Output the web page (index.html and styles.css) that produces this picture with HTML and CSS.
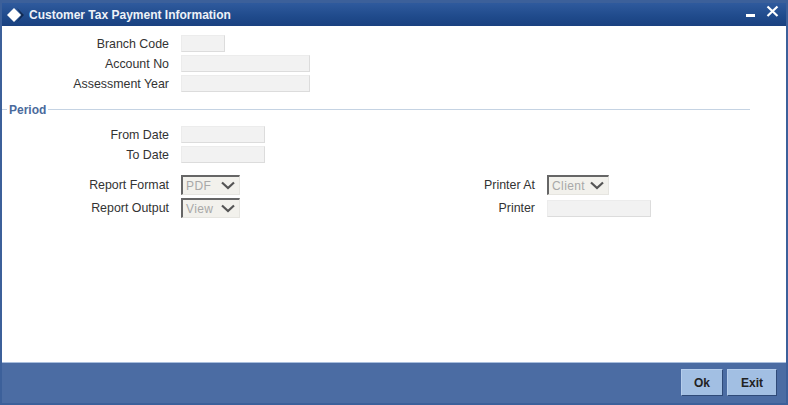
FILE: index.html
```html
<!DOCTYPE html>
<html lang="en">
<head>
<meta charset="utf-8">
<title>Customer Tax Payment Information</title>
<link rel="stylesheet" href="styles.css">
</head>
<body>
<div class="window">
  <header class="titlebar">
    <svg class="logo" width="18" height="16" viewBox="0 0 18 16"><path d="M7 1 14 8 7 15 0 8Z" fill="#fff"/><path d="M10 1 17 8 10 15 14.5 8Z" fill="#12294f"/></svg>
    <h1 class="title">Customer Tax Payment Information</h1>
    <svg class="winbtn" width="34" height="16" viewBox="0 0 34 16"><rect x="0" y="9" width="9" height="3" fill="#fff"/><path d="M21.5 1.5 31.5 11M31.5 1.5 21.5 11" stroke="#fff" stroke-width="2.2" fill="none"/></svg>
  </header>
  <main class="content">
    <section class="rows top">
      <div class="row"><label class="lbl">Branch Code</label><span class="inp w44"></span></div>
      <div class="row"><label class="lbl">Account No</label><span class="inp w129"></span></div>
      <div class="row"><label class="lbl">Assessment Year</label><span class="inp w129"></span></div>
    </section>
    <div class="legend"><span class="legend-text">Period</span></div>
    <section class="rows dates">
      <div class="row"><label class="lbl">From Date</label><span class="inp w84"></span></div>
      <div class="row"><label class="lbl">To Date</label><span class="inp w84"></span></div>
    </section>
    <section class="report">
      <div class="rcol">
        <div class="row sel-row"><label class="lbl">Report Format</label><span class="sel w59"><span class="sel-text">PDF</span><svg class="chev" width="14" height="9" viewBox="0 0 14 9"><path d="M1 1.5 7 7 13 1.5" fill="none" stroke="#555" stroke-width="2.2"/></svg></span></div>
        <div class="row sel-row"><label class="lbl">Report Output</label><span class="sel w59"><span class="sel-text">View</span><svg class="chev" width="14" height="9" viewBox="0 0 14 9"><path d="M1 1.5 7 7 13 1.5" fill="none" stroke="#555" stroke-width="2.2"/></svg></span></div>
      </div>
      <div class="rcol right">
        <div class="row sel-row"><label class="lbl">Printer At</label><span class="sel w62"><span class="sel-text">Client</span><svg class="chev" width="14" height="9" viewBox="0 0 14 9"><path d="M1 1.5 7 7 13 1.5" fill="none" stroke="#555" stroke-width="2.2"/></svg></span></div>
        <div class="row sel-row"><label class="lbl">Printer</label><span class="inp w104"></span></div>
      </div>
    </section>
  </main>
  <footer class="footer">
    <button class="btn btn-ok" type="button">Ok</button>
    <button class="btn btn-exit" type="button">Exit</button>
  </footer>
</div>
</body>
</html>
```
FILE: styles.css
```css
* { box-sizing: border-box; }
html, body { margin: 0; padding: 0; }
body { width: 788px; height: 405px; overflow: hidden; font-family: "Liberation Sans", Arial, sans-serif; font-size: 12px; color: #333; background: #3c609a; }
.window { width: 788px; height: 405px; display: flex; flex-direction: column; padding: 3px 2px 2px; background: #3c609a; }
.titlebar { height: 23px; flex: none; display: flex; align-items: center; padding-left: 5px; background: linear-gradient(#2f5a9d, #1f4a8b 60%, #1a4180); }
.logo { flex: none; margin-right: 4px; }
.title { margin: 0; flex: 1; font-size: 12px; font-weight: bold; color: #eef2f8; line-height: 16px; }
.winbtn { flex: none; margin: 0 6px 4px 0; }
.content { flex: 1; background: #fff; padding-top: 9px; min-height: 0; }
.rows { display: flex; flex-direction: column; gap: 3px; }
.row { display: flex; align-items: center; height: 17px; }
.lbl { width: 167px; text-align: right; margin-right: 12px; font-size: 12.4px; line-height: 14px; color: #333; flex: none; }
.inp { display: block; height: 17px; background: #f2f2f2; border: 1px solid #ececec; border-bottom: 1px solid #dcdcdc; border-right: 1px solid #dcdcdc; flex: none; }
.w44 { width: 44px; }
.w84 { width: 84px; }
.w104 { width: 104px; }
.w129 { width: 129px; }
.legend { margin-top: 9px; height: 17px; display: flex; align-items: center; width: 748px; }
.legend::before { content: ""; width: 5px; height: 1px; background: #c5d3e3; }
.legend::after { content: ""; flex: 1; height: 1px; background: #c5d3e3; }
.legend-text { color: #4a6a9c; font-weight: bold; padding: 0 2px; line-height: 14px; }
.dates { margin-top: 8px; }
.report { display: flex; margin-top: 12px; }
.rcol { display: flex; flex-direction: column; gap: 3px; width: 366px; }
.sel-row { height: 20px; }
.sel { display: flex; align-items: center; justify-content: space-between; height: 20px; padding: 0 4px 0 3px; background: #f2f1ec; border-top: 2px solid #666; border-left: 2px solid #666; border-right: 1px solid #e6e5e0; border-bottom: 1px solid #e6e5e0; color: #a8a8a8; font-size: 12px; flex: none; }
.sel-text { letter-spacing: .4px; }
.w59 { width: 59px; }
.w62 { width: 62px; }
.chev { flex: none; }
.footer { height: 41px; flex: none; display: flex; justify-content: flex-end; align-items: flex-start; gap: 4px; padding: 6px 9px 0 0; background: #4b6ca3; border-top: 1px solid #a9bedd; }
.btn { height: 27px; padding: 0; font: bold 12px "Liberation Sans", Arial, sans-serif; color: #222; background: #a2bfe3; border: 1px solid; border-color: #b5cdec #2f4a78 #2f4a78 #b5cdec; }
.btn-ok { width: 42px; }
.btn-exit { width: 50px; }
```
